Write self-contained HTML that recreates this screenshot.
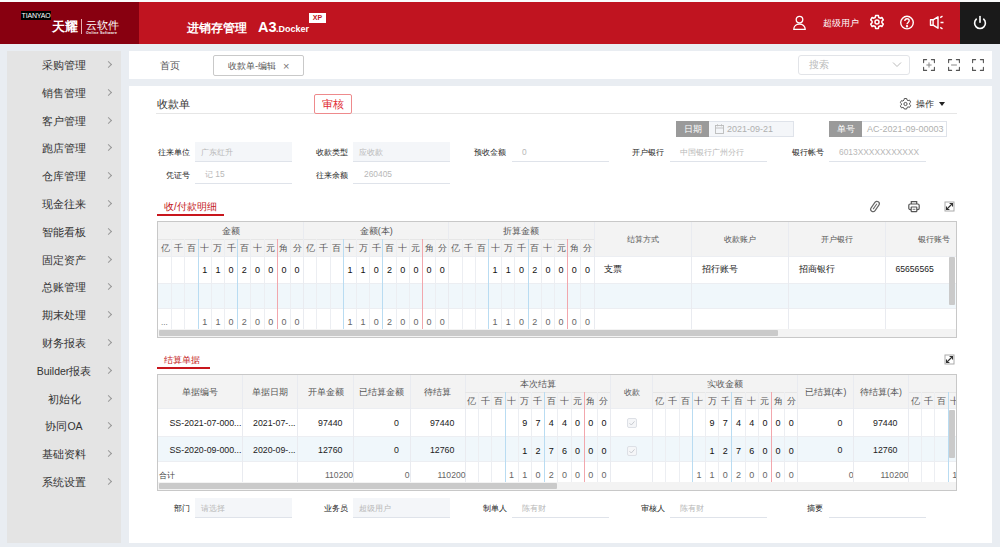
<!DOCTYPE html>
<html><head><meta charset="utf-8">
<style>
*{margin:0;padding:0;box-sizing:border-box}
html,body{width:1000px;height:547px;overflow:hidden;background:#e9edf2;font-family:"Liberation Sans",sans-serif;color:#333}
.a{position:absolute}
#top{left:0;top:0;width:1000px;height:2px;background:#fafcfc}
#hdr{left:0;top:2px;width:1000px;height:42px;background:#c01420}
#logo{left:0;top:2px;width:139px;height:42px;background:#880010}
#pwr{left:960px;top:2px;width:40px;height:42px;background:#1a1a1a}
.wt{color:#fff}
#side{left:7px;top:51px;width:114px;height:492px;background:#e4e4e4}
.mi{position:absolute;left:0;width:114px;height:20px;font-size:10.5px;line-height:20px;color:#333;text-align:center;padding-right:0}
.chev{position:absolute;left:99px;width:5px;height:5px;border-right:1px solid #999;border-top:1px solid #999;transform:rotate(45deg)}
#tabs{left:129px;top:51px;width:863px;height:28px;background:#fff}
#main{left:129px;top:86px;width:863px;height:457px;background:#fff}
.lb{position:absolute;font-size:8.4px;line-height:12px;color:#222;text-align:right;white-space:nowrap}
.in{position:absolute;height:19px;border-bottom:1px solid #dfe3ea;font-size:8.4px;line-height:18px;color:#b8b8b8;white-space:nowrap}
.in.g{background:#f4f6f9}
</style></head><body>
<div class="a" id="top"></div>
<div class="a" id="hdr"></div>
<div class="a" id="logo"></div>
<div class="a" id="pwr"></div>
<div class="a" style="left:21px;top:11px;width:30px;height:9px;background:#000;color:#fff;font-size:7px;line-height:9px;font-weight:normal;text-align:center;letter-spacing:-0.2px">TIANYAO</div>
<div class="a wt" style="left:52px;top:20px;font-size:12.5px;line-height:14px;font-weight:bold">天耀</div>
<div class="a" style="left:81px;top:19px;width:1px;height:15px;background:#e8b0b0"></div>
<div class="a wt" style="left:86px;top:19px;font-size:11px;line-height:13px;letter-spacing:0.2px">云软件</div>
<div class="a wt" style="left:86px;top:31px;font-size:3.5px;line-height:4px;font-weight:bold;letter-spacing:0.3px">Online Software</div>
<div class="a wt" style="left:187px;top:21px;font-size:11.8px;line-height:14px;font-weight:bold">进销存管理</div>
<div class="a wt" style="left:258px;top:19px;font-size:14.5px;line-height:16px;font-weight:bold">A3</div>
<div class="a wt" style="left:276px;top:24px;font-size:9px;line-height:10px;font-weight:bold">.Docker</div>
<div class="a" style="left:309px;top:13px;width:17px;height:10px;background:#fff;color:#c01420;font-size:7px;line-height:10px;font-weight:bold;text-align:center">XP</div>
<svg class="a" style="left:792px;top:15px" width="15" height="16" viewBox="0 0 15 16" fill="none" stroke="#fff" stroke-width="1.3"><circle cx="7.5" cy="4.6" r="3.3"/><path d="M1.8 14.3c0-3.3 2.6-5.3 5.7-5.3s5.7 2 5.7 5.3z"/></svg>
<div class="a wt" style="left:823px;top:17px;font-size:8.5px;line-height:12px">超级用户</div>
<svg class="a" style="left:869px;top:14px" width="16" height="16" viewBox="0 0 16 16" fill="none" stroke="#fff" stroke-width="1.5"><path d="M6.6 1.6h2.8l.4 1.9 1.3.7 1.8-.7 1.4 2.4-1.4 1.3v1.6l1.4 1.3-1.4 2.4-1.8-.7-1.3.7-.4 1.9H6.6l-.4-1.9-1.3-.7-1.8.7-1.4-2.4 1.4-1.3V7.2L1.7 5.9l1.4-2.4 1.8.7 1.3-.7z" stroke-linejoin="round"/><circle cx="8" cy="8" r="2"/></svg>
<svg class="a" style="left:899px;top:15px" width="16" height="16" viewBox="0 0 16 16" fill="none" stroke="#fff" stroke-width="1.4"><circle cx="8" cy="7.6" r="6.3"/><path d="M5.8 6c0-1.4 1-2.2 2.2-2.2s2.2.8 2.2 2c0 1.6-2.2 1.7-2.2 3.5"/><circle cx="8" cy="11.3" r=".5" fill="#fff"/></svg>
<svg class="a" style="left:929px;top:15px" width="16" height="15" viewBox="0 0 16 15" fill="none" stroke="#fff" stroke-width="1.4"><path d="M1.5 4.8h2.6L9 1.8v11.4L4.1 10.2H1.5z" stroke-linejoin="round"/><path d="M4.1 4.8v5.4"/><path d="M11.2 2.6l2.3-1.4M11.5 7.5h3M11.2 12.4l2.3 1.4"/></svg>
<svg class="a" style="left:972px;top:15px" width="16" height="16" viewBox="0 0 16 16" fill="none" stroke="#fff" stroke-width="1.6" stroke-linecap="round"><path d="M4.3 4.2a5.4 5.4 0 1 0 7.4 0"/><path d="M8 1.6v5.6"/></svg>
<div class="a" id="side">
<div class="mi" style="top:4.0px">采购管理</div><div class="chev" style="top:11.0px"></div>
<div class="mi" style="top:31.8px">销售管理</div><div class="chev" style="top:38.8px"></div>
<div class="mi" style="top:59.6px">客户管理</div><div class="chev" style="top:66.6px"></div>
<div class="mi" style="top:87.4px">跑店管理</div><div class="chev" style="top:94.4px"></div>
<div class="mi" style="top:115.2px">仓库管理</div><div class="chev" style="top:122.2px"></div>
<div class="mi" style="top:143.0px">现金往来</div><div class="chev" style="top:150.0px"></div>
<div class="mi" style="top:170.8px">智能看板</div><div class="chev" style="top:177.8px"></div>
<div class="mi" style="top:198.6px">固定资产</div><div class="chev" style="top:205.6px"></div>
<div class="mi" style="top:226.4px">总账管理</div><div class="chev" style="top:233.4px"></div>
<div class="mi" style="top:254.2px">期末处理</div><div class="chev" style="top:261.2px"></div>
<div class="mi" style="top:282.0px">财务报表</div><div class="chev" style="top:289.0px"></div>
<div class="mi" style="top:309.8px">Builder报表</div><div class="chev" style="top:316.8px"></div>
<div class="mi" style="top:337.6px">初始化</div><div class="chev" style="top:344.6px"></div>
<div class="mi" style="top:365.4px">协同OA</div><div class="chev" style="top:372.4px"></div>
<div class="mi" style="top:393.2px">基础资料</div><div class="chev" style="top:400.2px"></div>
<div class="mi" style="top:421.0px">系统设置</div><div class="chev" style="top:428.0px"></div>
</div>
<div class="a" id="tabs"></div>
<div class="a" style="left:160px;top:60px;font-size:10px;line-height:12px;color:#555">首页</div>
<div class="a" style="left:213px;top:55px;width:91px;height:21px;border:1px solid #c9c9c9;border-radius:2px;background:#fff"></div>
<div class="a" style="left:228px;top:60px;font-size:9.3px;line-height:12px;color:#555">收款单-编辑</div>
<div class="a" style="left:283px;top:59px;font-size:11px;line-height:14px;color:#777">&#215;</div>
<div class="a" style="left:798px;top:55px;width:112px;height:20px;border:1px solid #e2e4e8;border-radius:3px;background:#fff"></div>
<div class="a" style="left:809px;top:59px;font-size:9.5px;line-height:12px;color:#bbb">搜索</div>
<svg class="a" style="left:892px;top:61px" width="10" height="7" viewBox="0 0 10 7" fill="none" stroke="#bbb" stroke-width="1"><path d="M1 1.5l4 4 4-4"/></svg>
<svg class="a" style="left:923px;top:59px" width="12" height="12" viewBox="0 0 12 12" fill="none" stroke="#555" stroke-width="1.1" stroke-linecap="round"><path d="M.6 3.6V.6h3M8.4.6h3v3M11.4 8.4v3h-3M3.6 11.4h-3v-3"/><path d="M6 3.8v4.4M3.8 6h4.4" stroke="#888" stroke-width="1"/></svg>
<svg class="a" style="left:947.5px;top:59px" width="12" height="12" viewBox="0 0 12 12" fill="none" stroke="#555" stroke-width="1.1" stroke-linecap="round"><path d="M.6 3.6V.6h3M8.4.6h3v3M11.4 8.4v3h-3M3.6 11.4h-3v-3"/><path d="M3.5 6h5" stroke="#888" stroke-width="1"/></svg>
<svg class="a" style="left:972px;top:59px" width="12" height="12" viewBox="0 0 12 12" fill="none" stroke="#555" stroke-width="1.1" stroke-linecap="round"><path d="M.6 3.6V.6h3M8.4.6h3v3M11.4 8.4v3h-3M3.6 11.4h-3v-3"/></svg>
<div class="a" id="main"></div>
<div class="a" style="left:157px;top:97px;font-size:11px;line-height:14px;color:#333">收款单</div>
<div class="a" style="left:156px;top:113px;width:801px;height:1px;background:#e6e6e6"></div>
<div class="a" style="left:314px;top:94px;width:38px;height:20px;border:1px solid #ee8a8c;border-radius:2px;background:#fff;color:#df2a33;font-size:11px;line-height:19px;text-align:center">审核</div>
<svg class="a" style="left:899px;top:98px" width="13" height="12" viewBox="0 0 13 12" fill="none" stroke="#555" stroke-width="1"><path d="M5.3 1h2.4l.3 1.5 1.1.6 1.4-.5 1.2 2-1.1 1v1.3l1.1 1-1.2 2-1.4-.5-1.1.6-.3 1.5H5.3L5 10.5l-1.1-.6-1.4.5-1.2-2 1.1-1V6.1l-1.1-1 1.2-2 1.4.5L5 2.5z" stroke-linejoin="round" transform="translate(0 -.5)"/><circle cx="6.5" cy="6" r="1.6"/></svg>
<div class="a" style="left:916px;top:99px;font-size:8.5px;line-height:11px;color:#333">操作</div>
<div class="a" style="left:939px;top:102px;width:0;height:0;border-left:3.5px solid transparent;border-right:3.5px solid transparent;border-top:4.5px solid #222"></div>
<div class="lb" style="left:130px;top:145.5px;width:60px">往来单位</div><div class="in g" style="left:195px;top:142px;width:97px;height:20px;line-height:20px;padding-left:6px">广东红升</div>
<div class="lb" style="left:288px;top:145.5px;width:60px">收款类型</div><div class="in g" style="left:353px;top:142px;width:97px;height:20px;line-height:20px;padding-left:6px">应收款</div>
<div class="lb" style="left:446px;top:145.5px;width:60px">预收金额</div><div class="in" style="left:512px;top:142px;width:97px;height:20px;line-height:20px;padding-left:10px">0</div>
<div class="lb" style="left:604px;top:145.5px;width:60px">开户银行</div><div class="in" style="left:670px;top:142px;width:97px;height:20px;line-height:20px;padding-left:10px">中国银行广州分行</div>
<div class="lb" style="left:764px;top:145.5px;width:60px">银行帐号</div><div class="in" style="left:829px;top:142px;width:97px;height:20px;line-height:20px;padding-left:10px">6013XXXXXXXXXXX</div>
<div class="lb" style="left:130px;top:168.5px;width:60px">凭证号</div><div class="in" style="left:195px;top:165px;width:97px;padding-left:10px">记 15</div>
<div class="lb" style="left:288px;top:168.5px;width:60px">往来余额</div><div class="in" style="left:353px;top:165px;width:97px;padding-left:11px">260405</div>
<div class="lb" style="left:130px;top:501.5px;width:60px">部门</div><div class="in g" style="left:195px;top:498px;width:97px;height:20px;line-height:20px;padding-left:6px">请选择</div>
<div class="lb" style="left:288px;top:501.5px;width:60px">业务员</div><div class="in g" style="left:353px;top:498px;width:97px;height:20px;line-height:20px;padding-left:6px">超级用户</div>
<div class="lb" style="left:447px;top:501.5px;width:60px">制单人</div><div class="in" style="left:512px;top:498px;width:97px;height:20px;line-height:20px;padding-left:10px">陈有财</div>
<div class="lb" style="left:605px;top:501.5px;width:60px">审核人</div><div class="in" style="left:670px;top:498px;width:97px;height:20px;line-height:20px;padding-left:10px">陈有财</div>
<div class="lb" style="left:763px;top:501.5px;width:60px">摘要</div><div class="in" style="left:829px;top:498px;width:97px;height:20px;line-height:20px;padding-left:10px"></div>
<div class="a" style="left:676px;top:121px;width:34px;height:16px;background:#9a9a9a;color:#fff;font-size:8.5px;line-height:16px;text-align:center">日期</div>
<div class="a" style="left:709px;top:121px;width:85px;height:16px;background:#f4f6f9;border:1px solid #dfe3ea;border-left:none"></div>
<svg class="a" style="left:715px;top:124px" width="9" height="10" viewBox="0 0 9 10" fill="none" stroke="#bbb" stroke-width=".9"><rect x=".5" y="1.5" width="8" height="8"/><path d="M.5 4h8M2.5 .3v2M6.5 .3v2"/></svg>
<div class="a" style="left:727px;top:123px;font-size:9px;line-height:12px;color:#b0b0b0">2021-09-21</div>
<div class="a" style="left:829px;top:121px;width:34px;height:16px;background:#9a9a9a;color:#fff;font-size:8.5px;line-height:16px;text-align:center">单号</div>
<div class="a" style="left:862px;top:121px;width:85px;height:16px;background:#fff;border:1px solid #dfe3ea;border-left:none"></div>
<div class="a" style="left:867px;top:123px;font-size:9px;line-height:12px;color:#b0b0b0">AC-2021-09-00003</div>
<!--T1-->
<div class="a" style="left:164px;top:201px;font-size:10px;line-height:12px;color:#c41a23">收/付款明细</div>
<div class="a" style="left:157px;top:214px;width:67px;height:2px;background:#c8161d"></div>
<svg class="a" style="left:869px;top:200px" width="12" height="13" viewBox="0 0 12 13"><g transform="rotate(35 6 6.5)"><rect x="3.6" y="0.8" width="4.8" height="11.4" rx="2.4" fill="none" stroke="#666" stroke-width="1.2"/><path d="M6 3.2v6.5" stroke="#666" stroke-width="1"/></g></svg>
<svg class="a" style="left:908px;top:200px" width="12" height="13" viewBox="0 0 12 13" fill="none" stroke="#555" stroke-width="1.2"><path d="M3.3 4V1.6h5.4V4"/><path d="M3 9.6H2.2A1.4 1.4 0 0 1 .8 8.2V5.4A1.4 1.4 0 0 1 2.2 4h7.6a1.4 1.4 0 0 1 1.4 1.4v2.8a1.4 1.4 0 0 1-1.4 1.4H9"/><rect x="3.2" y="7" width="5.6" height="4.6" rx=".6"/><path d="M4.6 9.3h2.8" stroke-width=".8"/></svg>
<svg class="a" style="left:944px;top:201px" width="11" height="11" viewBox="0 0 11 11" fill="none"><rect x="1" y="1" width="9" height="9" stroke="#aaa" stroke-width="1"/><path d="M2.5 8.5l6-6M5.6 2.5h2.9v2.9M2.5 5.6v2.9h2.9" stroke="#333" stroke-width="1.1"/></svg>
<div class="a" style="left:157px;top:221px;width:800px;height:117px;border:1px solid #c8c8c8;background:#fff"></div>
<div class="a" style="left:158px;top:222px;width:798px;height:34px;background:#f3f3f3"></div>
<div class="a" style="left:158px;top:283px;width:798px;height:25px;background:#f0f7fb"></div>
<div class="a" style="left:158px;top:239px;width:435.60px;height:1px;background:#e6e6e6"></div>
<div class="a" style="left:158px;top:256px;width:798px;height:1px;background:#eceef2"></div>
<div class="a" style="left:158px;top:283px;width:798px;height:1px;background:#eceef2"></div>
<div class="a" style="left:158px;top:308px;width:798px;height:1px;background:#eceef2"></div>
<div class="a" style="left:171.20px;top:239px;width:1px;height:90px;background:#eceef2"></div>
<div class="a" style="left:158.50px;top:240px;width:13.20px;text-align:center;font-size:9px;line-height:17px;color:#555">亿</div>
<div class="a" style="left:184.40px;top:239px;width:1px;height:90px;background:#eceef2"></div>
<div class="a" style="left:171.70px;top:240px;width:13.20px;text-align:center;font-size:9px;line-height:17px;color:#555">千</div>
<div class="a" style="left:197.60px;top:239px;width:1px;height:90px;background:#b9dcf2"></div>
<div class="a" style="left:184.90px;top:240px;width:13.20px;text-align:center;font-size:9px;line-height:17px;color:#555">百</div>
<div class="a" style="left:210.80px;top:239px;width:1px;height:90px;background:#eceef2"></div>
<div class="a" style="left:198.10px;top:240px;width:13.20px;text-align:center;font-size:9px;line-height:17px;color:#555">十</div>
<div class="a" style="left:224.00px;top:239px;width:1px;height:90px;background:#eceef2"></div>
<div class="a" style="left:211.30px;top:240px;width:13.20px;text-align:center;font-size:9px;line-height:17px;color:#555">万</div>
<div class="a" style="left:237.20px;top:239px;width:1px;height:90px;background:#b9dcf2"></div>
<div class="a" style="left:224.50px;top:240px;width:13.20px;text-align:center;font-size:9px;line-height:17px;color:#555">千</div>
<div class="a" style="left:250.40px;top:239px;width:1px;height:90px;background:#eceef2"></div>
<div class="a" style="left:237.70px;top:240px;width:13.20px;text-align:center;font-size:9px;line-height:17px;color:#555">百</div>
<div class="a" style="left:263.60px;top:239px;width:1px;height:90px;background:#eceef2"></div>
<div class="a" style="left:250.90px;top:240px;width:13.20px;text-align:center;font-size:9px;line-height:17px;color:#555">十</div>
<div class="a" style="left:276.80px;top:239px;width:1px;height:90px;background:#f2a7ad"></div>
<div class="a" style="left:264.10px;top:240px;width:13.20px;text-align:center;font-size:9px;line-height:17px;color:#555">元</div>
<div class="a" style="left:290.00px;top:239px;width:1px;height:90px;background:#eceef2"></div>
<div class="a" style="left:277.30px;top:240px;width:13.20px;text-align:center;font-size:9px;line-height:17px;color:#555">角</div>
<div class="a" style="left:303.20px;top:222px;width:1px;height:107px;background:#e9ebf0"></div>
<div class="a" style="left:290.50px;top:240px;width:13.20px;text-align:center;font-size:9px;line-height:17px;color:#555">分</div>
<div class="a" style="left:158.50px;top:223px;width:145.20px;text-align:center;font-size:9px;line-height:17px;color:#555">金额</div>
<div class="a" style="left:198.10px;top:257px;width:13.20px;text-align:center;font-size:9px;line-height:27px;color:#111">1</div>
<div class="a" style="left:198.10px;top:312px;width:13.20px;text-align:center;font-size:9px;line-height:20px;color:#666">1</div>
<div class="a" style="left:211.30px;top:257px;width:13.20px;text-align:center;font-size:9px;line-height:27px;color:#111">1</div>
<div class="a" style="left:211.30px;top:312px;width:13.20px;text-align:center;font-size:9px;line-height:20px;color:#666">1</div>
<div class="a" style="left:224.50px;top:257px;width:13.20px;text-align:center;font-size:9px;line-height:27px;color:#111">0</div>
<div class="a" style="left:224.50px;top:312px;width:13.20px;text-align:center;font-size:9px;line-height:20px;color:#666">0</div>
<div class="a" style="left:237.70px;top:257px;width:13.20px;text-align:center;font-size:9px;line-height:27px;color:#111">2</div>
<div class="a" style="left:237.70px;top:312px;width:13.20px;text-align:center;font-size:9px;line-height:20px;color:#666">2</div>
<div class="a" style="left:250.90px;top:257px;width:13.20px;text-align:center;font-size:9px;line-height:27px;color:#111">0</div>
<div class="a" style="left:250.90px;top:312px;width:13.20px;text-align:center;font-size:9px;line-height:20px;color:#666">0</div>
<div class="a" style="left:264.10px;top:257px;width:13.20px;text-align:center;font-size:9px;line-height:27px;color:#111">0</div>
<div class="a" style="left:264.10px;top:312px;width:13.20px;text-align:center;font-size:9px;line-height:20px;color:#666">0</div>
<div class="a" style="left:277.30px;top:257px;width:13.20px;text-align:center;font-size:9px;line-height:27px;color:#111">0</div>
<div class="a" style="left:277.30px;top:312px;width:13.20px;text-align:center;font-size:9px;line-height:20px;color:#666">0</div>
<div class="a" style="left:290.50px;top:257px;width:13.20px;text-align:center;font-size:9px;line-height:27px;color:#111">0</div>
<div class="a" style="left:290.50px;top:312px;width:13.20px;text-align:center;font-size:9px;line-height:20px;color:#666">0</div>
<div class="a" style="left:316.40px;top:239px;width:1px;height:90px;background:#eceef2"></div>
<div class="a" style="left:303.70px;top:240px;width:13.20px;text-align:center;font-size:9px;line-height:17px;color:#555">亿</div>
<div class="a" style="left:329.60px;top:239px;width:1px;height:90px;background:#eceef2"></div>
<div class="a" style="left:316.90px;top:240px;width:13.20px;text-align:center;font-size:9px;line-height:17px;color:#555">千</div>
<div class="a" style="left:342.80px;top:239px;width:1px;height:90px;background:#b9dcf2"></div>
<div class="a" style="left:330.10px;top:240px;width:13.20px;text-align:center;font-size:9px;line-height:17px;color:#555">百</div>
<div class="a" style="left:356.00px;top:239px;width:1px;height:90px;background:#eceef2"></div>
<div class="a" style="left:343.30px;top:240px;width:13.20px;text-align:center;font-size:9px;line-height:17px;color:#555">十</div>
<div class="a" style="left:369.20px;top:239px;width:1px;height:90px;background:#eceef2"></div>
<div class="a" style="left:356.50px;top:240px;width:13.20px;text-align:center;font-size:9px;line-height:17px;color:#555">万</div>
<div class="a" style="left:382.40px;top:239px;width:1px;height:90px;background:#b9dcf2"></div>
<div class="a" style="left:369.70px;top:240px;width:13.20px;text-align:center;font-size:9px;line-height:17px;color:#555">千</div>
<div class="a" style="left:395.60px;top:239px;width:1px;height:90px;background:#eceef2"></div>
<div class="a" style="left:382.90px;top:240px;width:13.20px;text-align:center;font-size:9px;line-height:17px;color:#555">百</div>
<div class="a" style="left:408.80px;top:239px;width:1px;height:90px;background:#eceef2"></div>
<div class="a" style="left:396.10px;top:240px;width:13.20px;text-align:center;font-size:9px;line-height:17px;color:#555">十</div>
<div class="a" style="left:422.00px;top:239px;width:1px;height:90px;background:#f2a7ad"></div>
<div class="a" style="left:409.30px;top:240px;width:13.20px;text-align:center;font-size:9px;line-height:17px;color:#555">元</div>
<div class="a" style="left:435.20px;top:239px;width:1px;height:90px;background:#eceef2"></div>
<div class="a" style="left:422.50px;top:240px;width:13.20px;text-align:center;font-size:9px;line-height:17px;color:#555">角</div>
<div class="a" style="left:448.40px;top:222px;width:1px;height:107px;background:#e9ebf0"></div>
<div class="a" style="left:435.70px;top:240px;width:13.20px;text-align:center;font-size:9px;line-height:17px;color:#555">分</div>
<div class="a" style="left:303.70px;top:223px;width:145.20px;text-align:center;font-size:9px;line-height:17px;color:#555">金额(本)</div>
<div class="a" style="left:343.30px;top:257px;width:13.20px;text-align:center;font-size:9px;line-height:27px;color:#111">1</div>
<div class="a" style="left:343.30px;top:312px;width:13.20px;text-align:center;font-size:9px;line-height:20px;color:#666">1</div>
<div class="a" style="left:356.50px;top:257px;width:13.20px;text-align:center;font-size:9px;line-height:27px;color:#111">1</div>
<div class="a" style="left:356.50px;top:312px;width:13.20px;text-align:center;font-size:9px;line-height:20px;color:#666">1</div>
<div class="a" style="left:369.70px;top:257px;width:13.20px;text-align:center;font-size:9px;line-height:27px;color:#111">0</div>
<div class="a" style="left:369.70px;top:312px;width:13.20px;text-align:center;font-size:9px;line-height:20px;color:#666">0</div>
<div class="a" style="left:382.90px;top:257px;width:13.20px;text-align:center;font-size:9px;line-height:27px;color:#111">2</div>
<div class="a" style="left:382.90px;top:312px;width:13.20px;text-align:center;font-size:9px;line-height:20px;color:#666">2</div>
<div class="a" style="left:396.10px;top:257px;width:13.20px;text-align:center;font-size:9px;line-height:27px;color:#111">0</div>
<div class="a" style="left:396.10px;top:312px;width:13.20px;text-align:center;font-size:9px;line-height:20px;color:#666">0</div>
<div class="a" style="left:409.30px;top:257px;width:13.20px;text-align:center;font-size:9px;line-height:27px;color:#111">0</div>
<div class="a" style="left:409.30px;top:312px;width:13.20px;text-align:center;font-size:9px;line-height:20px;color:#666">0</div>
<div class="a" style="left:422.50px;top:257px;width:13.20px;text-align:center;font-size:9px;line-height:27px;color:#111">0</div>
<div class="a" style="left:422.50px;top:312px;width:13.20px;text-align:center;font-size:9px;line-height:20px;color:#666">0</div>
<div class="a" style="left:435.70px;top:257px;width:13.20px;text-align:center;font-size:9px;line-height:27px;color:#111">0</div>
<div class="a" style="left:435.70px;top:312px;width:13.20px;text-align:center;font-size:9px;line-height:20px;color:#666">0</div>
<div class="a" style="left:461.60px;top:239px;width:1px;height:90px;background:#eceef2"></div>
<div class="a" style="left:448.90px;top:240px;width:13.20px;text-align:center;font-size:9px;line-height:17px;color:#555">亿</div>
<div class="a" style="left:474.80px;top:239px;width:1px;height:90px;background:#eceef2"></div>
<div class="a" style="left:462.10px;top:240px;width:13.20px;text-align:center;font-size:9px;line-height:17px;color:#555">千</div>
<div class="a" style="left:488.00px;top:239px;width:1px;height:90px;background:#b9dcf2"></div>
<div class="a" style="left:475.30px;top:240px;width:13.20px;text-align:center;font-size:9px;line-height:17px;color:#555">百</div>
<div class="a" style="left:501.20px;top:239px;width:1px;height:90px;background:#eceef2"></div>
<div class="a" style="left:488.50px;top:240px;width:13.20px;text-align:center;font-size:9px;line-height:17px;color:#555">十</div>
<div class="a" style="left:514.40px;top:239px;width:1px;height:90px;background:#eceef2"></div>
<div class="a" style="left:501.70px;top:240px;width:13.20px;text-align:center;font-size:9px;line-height:17px;color:#555">万</div>
<div class="a" style="left:527.60px;top:239px;width:1px;height:90px;background:#b9dcf2"></div>
<div class="a" style="left:514.90px;top:240px;width:13.20px;text-align:center;font-size:9px;line-height:17px;color:#555">千</div>
<div class="a" style="left:540.80px;top:239px;width:1px;height:90px;background:#eceef2"></div>
<div class="a" style="left:528.10px;top:240px;width:13.20px;text-align:center;font-size:9px;line-height:17px;color:#555">百</div>
<div class="a" style="left:554.00px;top:239px;width:1px;height:90px;background:#eceef2"></div>
<div class="a" style="left:541.30px;top:240px;width:13.20px;text-align:center;font-size:9px;line-height:17px;color:#555">十</div>
<div class="a" style="left:567.20px;top:239px;width:1px;height:90px;background:#f2a7ad"></div>
<div class="a" style="left:554.50px;top:240px;width:13.20px;text-align:center;font-size:9px;line-height:17px;color:#555">元</div>
<div class="a" style="left:580.40px;top:239px;width:1px;height:90px;background:#eceef2"></div>
<div class="a" style="left:567.70px;top:240px;width:13.20px;text-align:center;font-size:9px;line-height:17px;color:#555">角</div>
<div class="a" style="left:593.60px;top:222px;width:1px;height:107px;background:#e9ebf0"></div>
<div class="a" style="left:580.90px;top:240px;width:13.20px;text-align:center;font-size:9px;line-height:17px;color:#555">分</div>
<div class="a" style="left:448.90px;top:223px;width:145.20px;text-align:center;font-size:9px;line-height:17px;color:#555">折算金额</div>
<div class="a" style="left:488.50px;top:257px;width:13.20px;text-align:center;font-size:9px;line-height:27px;color:#111">1</div>
<div class="a" style="left:488.50px;top:312px;width:13.20px;text-align:center;font-size:9px;line-height:20px;color:#666">1</div>
<div class="a" style="left:501.70px;top:257px;width:13.20px;text-align:center;font-size:9px;line-height:27px;color:#111">1</div>
<div class="a" style="left:501.70px;top:312px;width:13.20px;text-align:center;font-size:9px;line-height:20px;color:#666">1</div>
<div class="a" style="left:514.90px;top:257px;width:13.20px;text-align:center;font-size:9px;line-height:27px;color:#111">0</div>
<div class="a" style="left:514.90px;top:312px;width:13.20px;text-align:center;font-size:9px;line-height:20px;color:#666">0</div>
<div class="a" style="left:528.10px;top:257px;width:13.20px;text-align:center;font-size:9px;line-height:27px;color:#111">2</div>
<div class="a" style="left:528.10px;top:312px;width:13.20px;text-align:center;font-size:9px;line-height:20px;color:#666">2</div>
<div class="a" style="left:541.30px;top:257px;width:13.20px;text-align:center;font-size:9px;line-height:27px;color:#111">0</div>
<div class="a" style="left:541.30px;top:312px;width:13.20px;text-align:center;font-size:9px;line-height:20px;color:#666">0</div>
<div class="a" style="left:554.50px;top:257px;width:13.20px;text-align:center;font-size:9px;line-height:27px;color:#111">0</div>
<div class="a" style="left:554.50px;top:312px;width:13.20px;text-align:center;font-size:9px;line-height:20px;color:#666">0</div>
<div class="a" style="left:567.70px;top:257px;width:13.20px;text-align:center;font-size:9px;line-height:27px;color:#111">0</div>
<div class="a" style="left:567.70px;top:312px;width:13.20px;text-align:center;font-size:9px;line-height:20px;color:#666">0</div>
<div class="a" style="left:580.90px;top:257px;width:13.20px;text-align:center;font-size:9px;line-height:27px;color:#111">0</div>
<div class="a" style="left:580.90px;top:312px;width:13.20px;text-align:center;font-size:9px;line-height:20px;color:#666">0</div>
<div class="a" style="left:161px;top:313px;font-size:8px;line-height:20px;color:#555">...</div>
<div class="a" style="left:594.2px;top:222px;width:97.3px;text-align:center;font-size:8.4px;line-height:34px;color:#555;white-space:nowrap">结算方式</div>
<div class="a" style="left:604.2px;top:256px;font-size:8.6px;line-height:27px;color:#222;white-space:nowrap">支票</div>
<div class="a" style="left:691.0px;top:222px;width:1px;height:107px;background:#e9ebf0"></div>
<div class="a" style="left:691.5px;top:222px;width:97.0px;text-align:center;font-size:8.4px;line-height:34px;color:#555;white-space:nowrap">收款账户</div>
<div class="a" style="left:701.5px;top:256px;font-size:8.6px;line-height:27px;color:#222;white-space:nowrap">招行账号</div>
<div class="a" style="left:788.0px;top:222px;width:1px;height:107px;background:#e9ebf0"></div>
<div class="a" style="left:788.5px;top:222px;width:97.0px;text-align:center;font-size:8.4px;line-height:34px;color:#555;white-space:nowrap">开户银行</div>
<div class="a" style="left:798.5px;top:256px;font-size:8.6px;line-height:27px;color:#222;white-space:nowrap">招商银行</div>
<div class="a" style="left:885.0px;top:222px;width:1px;height:107px;background:#e9ebf0"></div>
<div class="a" style="left:885.5px;top:222px;width:96.5px;text-align:center;font-size:8.4px;line-height:34px;color:#555;white-space:nowrap">银行账号</div>
<div class="a" style="left:895.5px;top:256px;font-size:8.6px;line-height:27px;color:#222;white-space:nowrap">65656565</div>
<div class="a" style="left:957px;top:221px;width:35px;height:117px;background:#fff"></div>
<div class="a" style="left:956px;top:221px;width:1px;height:116px;background:#c8c8c8"></div>
<div class="a" style="left:949px;top:257px;width:6px;height:48px;background:#cacaca;border-radius:1px"></div>
<div class="a" style="left:158px;top:329px;width:798px;height:8px;background:#f3f3f3"></div>
<div class="a" style="left:159px;top:330px;width:619px;height:5.5px;background:#cacaca;border-radius:1px"></div>
<!--/T1-->
<!--T2-->
<div class="a" style="left:164px;top:354px;font-size:9.4px;line-height:12px;color:#c41a23">结算单据</div>
<div class="a" style="left:157px;top:367px;width:53px;height:2px;background:#c8161d"></div>
<svg class="a" style="left:944px;top:354px" width="11" height="11" viewBox="0 0 11 11" fill="none"><rect x="1" y="1" width="9" height="9" stroke="#aaa" stroke-width="1"/><path d="M2.5 8.5l6-6M5.6 2.5h2.9v2.9M2.5 5.6v2.9h2.9" stroke="#333" stroke-width="1.1"/></svg>
<div class="a" style="left:157px;top:374px;width:800px;height:117px;border:1px solid #c8c8c8;background:#fff"></div>
<div class="a" style="left:158px;top:375px;width:798px;height:33px;background:#f3f3f3"></div>
<div class="a" style="left:158px;top:436px;width:798px;height:25px;background:#f0f7fb"></div>
<div class="a" style="left:158px;top:408px;width:798px;height:1px;background:#eceef2"></div>
<div class="a" style="left:158px;top:436px;width:798px;height:1px;background:#eceef2"></div>
<div class="a" style="left:158px;top:461px;width:798px;height:1px;background:#eceef2"></div>
<div class="a" style="left:157.50px;top:375.0px;width:85.00px;text-align:center;font-size:8.7px;line-height:34px;color:#555;white-space:nowrap;">单据编号</div>
<div class="a" style="left:242.00px;top:375px;width:1px;height:107px;background:#e9ebf0"></div>
<div class="a" style="left:242.50px;top:375.0px;width:55.00px;text-align:center;font-size:8.7px;line-height:34px;color:#555;white-space:nowrap;">单据日期</div>
<div class="a" style="left:297.00px;top:375px;width:1px;height:107px;background:#e9ebf0"></div>
<div class="a" style="left:297.50px;top:375.0px;width:56.00px;text-align:center;font-size:8.7px;line-height:34px;color:#555;white-space:nowrap;">开单金额</div>
<div class="a" style="left:353.00px;top:375px;width:1px;height:107px;background:#e9ebf0"></div>
<div class="a" style="left:353.50px;top:375.0px;width:56.50px;text-align:center;font-size:8.7px;line-height:34px;color:#555;white-space:nowrap;">已结算金额</div>
<div class="a" style="left:409.50px;top:375px;width:1px;height:107px;background:#e9ebf0"></div>
<div class="a" style="left:410.00px;top:375.0px;width:55.40px;text-align:center;font-size:8.7px;line-height:34px;color:#555;white-space:nowrap;">待结算</div>
<div class="a" style="left:464.90px;top:375px;width:1px;height:107px;background:#e9ebf0"></div>
<div class="a" style="left:169.50px;top:410.0px;width:80.00px;text-align:left;font-size:8.8px;line-height:26px;color:#222;white-space:nowrap;">SS-2021-07-000...</div>
<div class="a" style="left:169.50px;top:436.5px;width:80.00px;text-align:left;font-size:8.8px;line-height:26px;color:#222;white-space:nowrap;">SS-2020-09-000...</div>
<div class="a" style="left:253.00px;top:410.0px;width:80.00px;text-align:left;font-size:8.8px;line-height:26px;color:#222;white-space:nowrap;">2021-07-...</div>
<div class="a" style="left:253.00px;top:436.5px;width:80.00px;text-align:left;font-size:8.8px;line-height:26px;color:#222;white-space:nowrap;">2020-09-...</div>
<div class="a" style="left:297.50px;top:410.0px;width:45.00px;text-align:right;font-size:8.8px;line-height:26px;color:#222;white-space:nowrap;">97440</div>
<div class="a" style="left:297.50px;top:436.5px;width:45.00px;text-align:right;font-size:8.8px;line-height:26px;color:#222;white-space:nowrap;">12760</div>
<div class="a" style="left:353.50px;top:410.0px;width:45.50px;text-align:right;font-size:8.8px;line-height:26px;color:#222;white-space:nowrap;">0</div>
<div class="a" style="left:353.50px;top:436.5px;width:45.50px;text-align:right;font-size:8.8px;line-height:26px;color:#222;white-space:nowrap;">0</div>
<div class="a" style="left:410.00px;top:410.0px;width:44.40px;text-align:right;font-size:8.8px;line-height:26px;color:#222;white-space:nowrap;">97440</div>
<div class="a" style="left:410.00px;top:436.5px;width:44.40px;text-align:right;font-size:8.8px;line-height:26px;color:#222;white-space:nowrap;">12760</div>
<div class="a" style="left:159.00px;top:465.0px;width:40.00px;text-align:left;font-size:8.4px;line-height:20px;color:#444;white-space:nowrap;">合计</div>
<div class="a" style="left:297.50px;top:465.0px;width:55.50px;text-align:right;font-size:8.6px;line-height:20px;color:#666;white-space:nowrap;">110200</div>
<div class="a" style="left:353.50px;top:465.0px;width:56.00px;text-align:right;font-size:8.6px;line-height:20px;color:#666;white-space:nowrap;">0</div>
<div class="a" style="left:410.00px;top:465.0px;width:55.50px;text-align:right;font-size:8.6px;line-height:20px;color:#666;white-space:nowrap;">110200</div>
<div class="a" style="left:465.40px;top:392px;width:145.20px;height:1px;background:#e6e6e6"></div>
<div class="a" style="left:478.10px;top:392px;width:1px;height:90px;background:#eceef2"></div>
<div class="a" style="left:465.40px;top:393.0px;width:13.20px;text-align:center;font-size:9px;line-height:17px;color:#555;white-space:nowrap;">亿</div>
<div class="a" style="left:491.30px;top:392px;width:1px;height:90px;background:#eceef2"></div>
<div class="a" style="left:478.60px;top:393.0px;width:13.20px;text-align:center;font-size:9px;line-height:17px;color:#555;white-space:nowrap;">千</div>
<div class="a" style="left:504.50px;top:392px;width:1px;height:90px;background:#b9dcf2"></div>
<div class="a" style="left:491.80px;top:393.0px;width:13.20px;text-align:center;font-size:9px;line-height:17px;color:#555;white-space:nowrap;">百</div>
<div class="a" style="left:517.70px;top:392px;width:1px;height:90px;background:#eceef2"></div>
<div class="a" style="left:505.00px;top:393.0px;width:13.20px;text-align:center;font-size:9px;line-height:17px;color:#555;white-space:nowrap;">十</div>
<div class="a" style="left:530.90px;top:392px;width:1px;height:90px;background:#eceef2"></div>
<div class="a" style="left:518.20px;top:393.0px;width:13.20px;text-align:center;font-size:9px;line-height:17px;color:#555;white-space:nowrap;">万</div>
<div class="a" style="left:544.10px;top:392px;width:1px;height:90px;background:#b9dcf2"></div>
<div class="a" style="left:531.40px;top:393.0px;width:13.20px;text-align:center;font-size:9px;line-height:17px;color:#555;white-space:nowrap;">千</div>
<div class="a" style="left:557.30px;top:392px;width:1px;height:90px;background:#eceef2"></div>
<div class="a" style="left:544.60px;top:393.0px;width:13.20px;text-align:center;font-size:9px;line-height:17px;color:#555;white-space:nowrap;">百</div>
<div class="a" style="left:570.50px;top:392px;width:1px;height:90px;background:#eceef2"></div>
<div class="a" style="left:557.80px;top:393.0px;width:13.20px;text-align:center;font-size:9px;line-height:17px;color:#555;white-space:nowrap;">十</div>
<div class="a" style="left:583.70px;top:392px;width:1px;height:90px;background:#f2a7ad"></div>
<div class="a" style="left:571.00px;top:393.0px;width:13.20px;text-align:center;font-size:9px;line-height:17px;color:#555;white-space:nowrap;">元</div>
<div class="a" style="left:596.90px;top:392px;width:1px;height:90px;background:#eceef2"></div>
<div class="a" style="left:584.20px;top:393.0px;width:13.20px;text-align:center;font-size:9px;line-height:17px;color:#555;white-space:nowrap;">角</div>
<div class="a" style="left:610.10px;top:375px;width:1px;height:107px;background:#e9ebf0"></div>
<div class="a" style="left:597.40px;top:393.0px;width:13.20px;text-align:center;font-size:9px;line-height:17px;color:#555;white-space:nowrap;">分</div>
<div class="a" style="left:465.40px;top:376.0px;width:145.20px;text-align:center;font-size:9px;line-height:17px;color:#555;white-space:nowrap;">本次结算</div>
<div class="a" style="left:518.20px;top:409.5px;width:13.20px;text-align:center;font-size:9px;line-height:27px;color:#111;white-space:nowrap;">9</div>
<div class="a" style="left:531.40px;top:409.5px;width:13.20px;text-align:center;font-size:9px;line-height:27px;color:#111;white-space:nowrap;">7</div>
<div class="a" style="left:544.60px;top:409.5px;width:13.20px;text-align:center;font-size:9px;line-height:27px;color:#111;white-space:nowrap;">4</div>
<div class="a" style="left:557.80px;top:409.5px;width:13.20px;text-align:center;font-size:9px;line-height:27px;color:#111;white-space:nowrap;">4</div>
<div class="a" style="left:571.00px;top:409.5px;width:13.20px;text-align:center;font-size:9px;line-height:27px;color:#111;white-space:nowrap;">0</div>
<div class="a" style="left:584.20px;top:409.5px;width:13.20px;text-align:center;font-size:9px;line-height:27px;color:#111;white-space:nowrap;">0</div>
<div class="a" style="left:597.40px;top:409.5px;width:13.20px;text-align:center;font-size:9px;line-height:27px;color:#111;white-space:nowrap;">0</div>
<div class="a" style="left:518.20px;top:437.5px;width:13.20px;text-align:center;font-size:9px;line-height:26px;color:#111;white-space:nowrap;">1</div>
<div class="a" style="left:531.40px;top:437.5px;width:13.20px;text-align:center;font-size:9px;line-height:26px;color:#111;white-space:nowrap;">2</div>
<div class="a" style="left:544.60px;top:437.5px;width:13.20px;text-align:center;font-size:9px;line-height:26px;color:#111;white-space:nowrap;">7</div>
<div class="a" style="left:557.80px;top:437.5px;width:13.20px;text-align:center;font-size:9px;line-height:26px;color:#111;white-space:nowrap;">6</div>
<div class="a" style="left:571.00px;top:437.5px;width:13.20px;text-align:center;font-size:9px;line-height:26px;color:#111;white-space:nowrap;">0</div>
<div class="a" style="left:584.20px;top:437.5px;width:13.20px;text-align:center;font-size:9px;line-height:26px;color:#111;white-space:nowrap;">0</div>
<div class="a" style="left:597.40px;top:437.5px;width:13.20px;text-align:center;font-size:9px;line-height:26px;color:#111;white-space:nowrap;">0</div>
<div class="a" style="left:505.00px;top:465.0px;width:13.20px;text-align:center;font-size:9px;line-height:20px;color:#666;white-space:nowrap;">1</div>
<div class="a" style="left:518.20px;top:465.0px;width:13.20px;text-align:center;font-size:9px;line-height:20px;color:#666;white-space:nowrap;">1</div>
<div class="a" style="left:531.40px;top:465.0px;width:13.20px;text-align:center;font-size:9px;line-height:20px;color:#666;white-space:nowrap;">0</div>
<div class="a" style="left:544.60px;top:465.0px;width:13.20px;text-align:center;font-size:9px;line-height:20px;color:#666;white-space:nowrap;">2</div>
<div class="a" style="left:557.80px;top:465.0px;width:13.20px;text-align:center;font-size:9px;line-height:20px;color:#666;white-space:nowrap;">0</div>
<div class="a" style="left:571.00px;top:465.0px;width:13.20px;text-align:center;font-size:9px;line-height:20px;color:#666;white-space:nowrap;">0</div>
<div class="a" style="left:584.20px;top:465.0px;width:13.20px;text-align:center;font-size:9px;line-height:20px;color:#666;white-space:nowrap;">0</div>
<div class="a" style="left:597.40px;top:465.0px;width:13.20px;text-align:center;font-size:9px;line-height:20px;color:#666;white-space:nowrap;">0</div>
<div class="a" style="left:609.90px;top:375px;width:1px;height:107px;background:#e9ebf0"></div>
<div class="a" style="left:610.40px;top:375.0px;width:42.30px;text-align:center;font-size:8.4px;line-height:34px;color:#555;white-space:nowrap;">收款</div>
<div class="a" style="left:627px;top:418.0px;width:10px;height:10px;border:1px solid #dde0e6;border-radius:2px;background:#f5f6f8"></div>
<svg class="a" style="left:628px;top:419.0px" width="8" height="8" viewBox="0 0 8 8" fill="none" stroke="#c8cbd0" stroke-width="1"><path d="M1.5 4.2l1.8 1.8 3.2-3.6"/></svg>
<div class="a" style="left:627px;top:445.5px;width:10px;height:10px;border:1px solid #dde0e6;border-radius:2px;background:#f5f6f8"></div>
<svg class="a" style="left:628px;top:446.5px" width="8" height="8" viewBox="0 0 8 8" fill="none" stroke="#c8cbd0" stroke-width="1"><path d="M1.5 4.2l1.8 1.8 3.2-3.6"/></svg>
<div class="a" style="left:652.20px;top:375px;width:1px;height:107px;background:#e9ebf0"></div>
<div class="a" style="left:652.70px;top:392px;width:145.20px;height:1px;background:#e6e6e6"></div>
<div class="a" style="left:665.40px;top:392px;width:1px;height:90px;background:#eceef2"></div>
<div class="a" style="left:652.70px;top:393.0px;width:13.20px;text-align:center;font-size:9px;line-height:17px;color:#555;white-space:nowrap;">亿</div>
<div class="a" style="left:678.60px;top:392px;width:1px;height:90px;background:#eceef2"></div>
<div class="a" style="left:665.90px;top:393.0px;width:13.20px;text-align:center;font-size:9px;line-height:17px;color:#555;white-space:nowrap;">千</div>
<div class="a" style="left:691.80px;top:392px;width:1px;height:90px;background:#b9dcf2"></div>
<div class="a" style="left:679.10px;top:393.0px;width:13.20px;text-align:center;font-size:9px;line-height:17px;color:#555;white-space:nowrap;">百</div>
<div class="a" style="left:705.00px;top:392px;width:1px;height:90px;background:#eceef2"></div>
<div class="a" style="left:692.30px;top:393.0px;width:13.20px;text-align:center;font-size:9px;line-height:17px;color:#555;white-space:nowrap;">十</div>
<div class="a" style="left:718.20px;top:392px;width:1px;height:90px;background:#eceef2"></div>
<div class="a" style="left:705.50px;top:393.0px;width:13.20px;text-align:center;font-size:9px;line-height:17px;color:#555;white-space:nowrap;">万</div>
<div class="a" style="left:731.40px;top:392px;width:1px;height:90px;background:#b9dcf2"></div>
<div class="a" style="left:718.70px;top:393.0px;width:13.20px;text-align:center;font-size:9px;line-height:17px;color:#555;white-space:nowrap;">千</div>
<div class="a" style="left:744.60px;top:392px;width:1px;height:90px;background:#eceef2"></div>
<div class="a" style="left:731.90px;top:393.0px;width:13.20px;text-align:center;font-size:9px;line-height:17px;color:#555;white-space:nowrap;">百</div>
<div class="a" style="left:757.80px;top:392px;width:1px;height:90px;background:#eceef2"></div>
<div class="a" style="left:745.10px;top:393.0px;width:13.20px;text-align:center;font-size:9px;line-height:17px;color:#555;white-space:nowrap;">十</div>
<div class="a" style="left:771.00px;top:392px;width:1px;height:90px;background:#f2a7ad"></div>
<div class="a" style="left:758.30px;top:393.0px;width:13.20px;text-align:center;font-size:9px;line-height:17px;color:#555;white-space:nowrap;">元</div>
<div class="a" style="left:784.20px;top:392px;width:1px;height:90px;background:#eceef2"></div>
<div class="a" style="left:771.50px;top:393.0px;width:13.20px;text-align:center;font-size:9px;line-height:17px;color:#555;white-space:nowrap;">角</div>
<div class="a" style="left:797.40px;top:375px;width:1px;height:107px;background:#e9ebf0"></div>
<div class="a" style="left:784.70px;top:393.0px;width:13.20px;text-align:center;font-size:9px;line-height:17px;color:#555;white-space:nowrap;">分</div>
<div class="a" style="left:652.70px;top:376.0px;width:145.20px;text-align:center;font-size:9px;line-height:17px;color:#555;white-space:nowrap;">实收金额</div>
<div class="a" style="left:705.50px;top:409.5px;width:13.20px;text-align:center;font-size:9px;line-height:27px;color:#111;white-space:nowrap;">9</div>
<div class="a" style="left:718.70px;top:409.5px;width:13.20px;text-align:center;font-size:9px;line-height:27px;color:#111;white-space:nowrap;">7</div>
<div class="a" style="left:731.90px;top:409.5px;width:13.20px;text-align:center;font-size:9px;line-height:27px;color:#111;white-space:nowrap;">4</div>
<div class="a" style="left:745.10px;top:409.5px;width:13.20px;text-align:center;font-size:9px;line-height:27px;color:#111;white-space:nowrap;">4</div>
<div class="a" style="left:758.30px;top:409.5px;width:13.20px;text-align:center;font-size:9px;line-height:27px;color:#111;white-space:nowrap;">0</div>
<div class="a" style="left:771.50px;top:409.5px;width:13.20px;text-align:center;font-size:9px;line-height:27px;color:#111;white-space:nowrap;">0</div>
<div class="a" style="left:784.70px;top:409.5px;width:13.20px;text-align:center;font-size:9px;line-height:27px;color:#111;white-space:nowrap;">0</div>
<div class="a" style="left:705.50px;top:437.5px;width:13.20px;text-align:center;font-size:9px;line-height:26px;color:#111;white-space:nowrap;">1</div>
<div class="a" style="left:718.70px;top:437.5px;width:13.20px;text-align:center;font-size:9px;line-height:26px;color:#111;white-space:nowrap;">2</div>
<div class="a" style="left:731.90px;top:437.5px;width:13.20px;text-align:center;font-size:9px;line-height:26px;color:#111;white-space:nowrap;">7</div>
<div class="a" style="left:745.10px;top:437.5px;width:13.20px;text-align:center;font-size:9px;line-height:26px;color:#111;white-space:nowrap;">6</div>
<div class="a" style="left:758.30px;top:437.5px;width:13.20px;text-align:center;font-size:9px;line-height:26px;color:#111;white-space:nowrap;">0</div>
<div class="a" style="left:771.50px;top:437.5px;width:13.20px;text-align:center;font-size:9px;line-height:26px;color:#111;white-space:nowrap;">0</div>
<div class="a" style="left:784.70px;top:437.5px;width:13.20px;text-align:center;font-size:9px;line-height:26px;color:#111;white-space:nowrap;">0</div>
<div class="a" style="left:692.30px;top:465.0px;width:13.20px;text-align:center;font-size:9px;line-height:20px;color:#666;white-space:nowrap;">1</div>
<div class="a" style="left:705.50px;top:465.0px;width:13.20px;text-align:center;font-size:9px;line-height:20px;color:#666;white-space:nowrap;">1</div>
<div class="a" style="left:718.70px;top:465.0px;width:13.20px;text-align:center;font-size:9px;line-height:20px;color:#666;white-space:nowrap;">0</div>
<div class="a" style="left:731.90px;top:465.0px;width:13.20px;text-align:center;font-size:9px;line-height:20px;color:#666;white-space:nowrap;">2</div>
<div class="a" style="left:745.10px;top:465.0px;width:13.20px;text-align:center;font-size:9px;line-height:20px;color:#666;white-space:nowrap;">0</div>
<div class="a" style="left:758.30px;top:465.0px;width:13.20px;text-align:center;font-size:9px;line-height:20px;color:#666;white-space:nowrap;">0</div>
<div class="a" style="left:771.50px;top:465.0px;width:13.20px;text-align:center;font-size:9px;line-height:20px;color:#666;white-space:nowrap;">0</div>
<div class="a" style="left:784.70px;top:465.0px;width:13.20px;text-align:center;font-size:9px;line-height:20px;color:#666;white-space:nowrap;">0</div>
<div class="a" style="left:797.00px;top:375px;width:1px;height:107px;background:#e9ebf0"></div>
<div class="a" style="left:797.50px;top:375.0px;width:56.00px;text-align:center;font-size:8.7px;line-height:34px;color:#555;white-space:nowrap;">已结算(本)</div>
<div class="a" style="left:797.50px;top:410.0px;width:45.00px;text-align:right;font-size:8.8px;line-height:26px;color:#222;white-space:nowrap;">0</div>
<div class="a" style="left:797.50px;top:436.5px;width:45.00px;text-align:right;font-size:8.8px;line-height:26px;color:#222;white-space:nowrap;">0</div>
<div class="a" style="left:797.50px;top:465.0px;width:56.00px;text-align:right;font-size:8.6px;line-height:20px;color:#666;white-space:nowrap;">0</div>
<div class="a" style="left:853.00px;top:375px;width:1px;height:107px;background:#e9ebf0"></div>
<div class="a" style="left:853.50px;top:375.0px;width:55.00px;text-align:center;font-size:8.7px;line-height:34px;color:#555;white-space:nowrap;">待结算(本)</div>
<div class="a" style="left:853.50px;top:410.0px;width:44.00px;text-align:right;font-size:8.8px;line-height:26px;color:#222;white-space:nowrap;">97440</div>
<div class="a" style="left:853.50px;top:436.5px;width:44.00px;text-align:right;font-size:8.8px;line-height:26px;color:#222;white-space:nowrap;">12760</div>
<div class="a" style="left:853.50px;top:465.0px;width:55.00px;text-align:right;font-size:8.6px;line-height:20px;color:#666;white-space:nowrap;">110200</div>
<div class="a" style="left:908.00px;top:375px;width:1px;height:107px;background:#e9ebf0"></div>
<div class="a" style="left:908.50px;top:392px;width:52.80px;height:1px;background:#e6e6e6"></div>
<div class="a" style="left:921.20px;top:392px;width:1px;height:90px;background:#eceef2"></div>
<div class="a" style="left:908.50px;top:393.0px;width:13.20px;text-align:center;font-size:9px;line-height:17px;color:#555;white-space:nowrap;">亿</div>
<div class="a" style="left:934.40px;top:392px;width:1px;height:90px;background:#eceef2"></div>
<div class="a" style="left:921.70px;top:393.0px;width:13.20px;text-align:center;font-size:9px;line-height:17px;color:#555;white-space:nowrap;">千</div>
<div class="a" style="left:947.60px;top:392px;width:1px;height:90px;background:#b9dcf2"></div>
<div class="a" style="left:934.90px;top:393.0px;width:13.20px;text-align:center;font-size:9px;line-height:17px;color:#555;white-space:nowrap;">百</div>
<div class="a" style="left:960.80px;top:392px;width:1px;height:90px;background:#eceef2"></div>
<div class="a" style="left:948.10px;top:393.0px;width:13.20px;text-align:center;font-size:9px;line-height:17px;color:#555;white-space:nowrap;">十</div>
<div class="a" style="left:948.10px;top:465.0px;width:13.20px;text-align:center;font-size:9px;line-height:20px;color:#666;white-space:nowrap;">1</div>
<div class="a" style="left:957px;top:374px;width:35px;height:117px;background:#fff"></div>
<div class="a" style="left:956px;top:374px;width:1px;height:116px;background:#c8c8c8"></div>
<div class="a" style="left:949px;top:410px;width:6px;height:48px;background:#cacaca;border-radius:1px"></div>
<div class="a" style="left:158px;top:482px;width:798px;height:8px;background:#f3f3f3"></div>
<div class="a" style="left:159px;top:483px;width:398px;height:5.5px;background:#cacaca;border-radius:1px"></div>
<!--/T2-->
</body></html>
